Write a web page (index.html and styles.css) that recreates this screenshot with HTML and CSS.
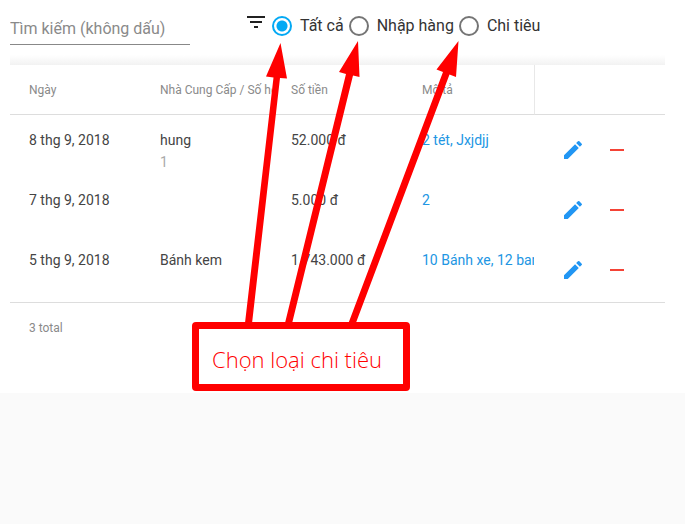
FILE: index.html
```html
<!DOCTYPE html>
<html lang="vi">
<head>
<meta charset="utf-8">
<meta name="viewport" content="width=device-width, initial-scale=1">
<title>Chi tiêu</title>
<link rel="stylesheet" href="styles.css">
</head>
<body>
<svg class="symbols" aria-hidden="true">
  <symbol id="edit" viewBox="0 0 24 24"><path d="M3 17.25V21h3.75L17.81 9.94l-3.75-3.75L3 17.25zM20.71 7.04a1 1 0 0 0 0-1.41l-2.34-2.34a1 1 0 0 0-1.41 0l-1.83 1.83 3.75 3.75 1.83-1.83z"/></symbol>
  <symbol id="remove" viewBox="0 0 24 24"><path d="M5 11h14v2H5z"/></symbol>
</svg>
<main class="page">
  <form class="toolbar">
    <input class="search" type="text" placeholder="Tìm kiếm (không dấu)" aria-label="Tìm kiếm (không dấu)">
    <div class="filters">
      <svg class="filter-icon" viewBox="0 0 18 12" aria-hidden="true"><path d="M0 0h18v2H0zM3 5h12v2H3zM7 10h4v2H7z"/></svg>
      <label class="option"><input type="radio" name="kind" checked><span>Tất cả</span></label>
      <label class="option"><input type="radio" name="kind"><span>Nhập hàng</span></label>
      <label class="option"><input type="radio" name="kind"><span>Chi tiêu</span></label>
    </div>
  </form>
  <div class="shade"></div>
  <table class="expenses">
    <thead>
      <tr><th>Ngày</th><th>Nhà Cung Cấp / Số hóa đơn</th><th>Số tiền</th><th>Mô tả</th><th class="divider"></th></tr>
    </thead>
    <tbody>
      <tr>
        <td>8 thg 9, 2018</td><td>hung<div class="invoice">1</div></td><td>52.000 đ</td><td><a href="#">2 tét, Jxjdjj</a></td>
        <td class="actions"><div class="buttons"><button type="button" class="edit" aria-label="Sửa"><svg><use href="#edit"/></svg></button><button type="button" class="remove" aria-label="Xóa"><svg><use href="#remove"/></svg></button></div></td>
      </tr>
      <tr>
        <td>7 thg 9, 2018</td><td></td><td>5.000 đ</td><td><a href="#">2</a></td>
        <td class="actions"><div class="buttons"><button type="button" class="edit" aria-label="Sửa"><svg><use href="#edit"/></svg></button><button type="button" class="remove" aria-label="Xóa"><svg><use href="#remove"/></svg></button></div></td>
      </tr>
      <tr>
        <td>5 thg 9, 2018</td><td>Bánh kem</td><td>1.743.000 đ</td><td><a href="#">10 Bánh xe, 12 banh</a></td>
        <td class="actions"><div class="buttons"><button type="button" class="edit" aria-label="Sửa"><svg><use href="#edit"/></svg></button><button type="button" class="remove" aria-label="Xóa"><svg><use href="#remove"/></svg></button></div></td>
      </tr>
    </tbody>
  </table>
  <footer class="total">3 total</footer>
  <svg class="arrows" viewBox="0 0 685 340" aria-hidden="true">
    <path d="M280.500 43L287 78.500 280 78 252 323.500 245 323 273.500 77.500 266 76.500z"/>
    <path d="M358 41L359.500 77 353 75.500 292 323.500 285 323 346 74 339 72z"/>
    <path d="M458.500 41L456 77 449.500 74.500 355.500 324 348.500 323 443 72 436.500 69.500z"/>
  </svg>
  <div class="callout">Chọn loại chi tiêu</div>
</main>
</body>
</html>
```
FILE: styles.css
```css
* { box-sizing: border-box; }
body {
  margin: 0;
  background: #fafafa;
  color: #444;
  font: 14px/20px Roboto, "Noto Sans", sans-serif;
}
.symbols { position: absolute; width: 0; height: 0; }
.page {
  position: relative;
  background: #fff;
  padding: 12px 20px 46px 10px;
}
.toolbar {
  display: flex;
  align-items: flex-start;
  gap: 57px;
  height: 43px;
}
.search {
  width: 180px;
  height: 33px;
  padding: 0;
  border: 0;
  border-bottom: 1px solid #888;
  background: none;
  font: inherit;
  font-size: 16px;
  outline: 0;
}
.search::placeholder { color: #8a8a8a; opacity: 1; }
.filters { display: flex; align-items: center; height: 28px; }
.filter-icon { width: 18px; height: 12px; margin: 0 7px 8px 0; fill: #212121; }
.option {
  display: flex;
  align-items: center;
  gap: 8px;
  margin-right: 5px;
  color: #333;
  font-size: 16px;
}
.option input {
  appearance: none;
  width: 20px;
  height: 20px;
  margin: 0;
  border: 2px solid #757575;
  border-radius: 50%;
}
.option input:checked {
  border-color: #03a9f4;
  background: radial-gradient(circle, #03a9f4 5px, transparent 6px);
}
.shade { height: 10px; background: linear-gradient(#fff, #f2f2f2); }
.expenses { width: 100%; table-layout: fixed; border-collapse: separate; border-spacing: 0; padding-bottom: 2px; border-bottom: 1px solid #ddd; }
.expenses th, .expenses td {
  padding: 0 0 0 19px;
  text-align: left;
  vertical-align: top;
  white-space: nowrap;
  overflow: hidden;
}
.expenses th {
  height: 50px;
  border-bottom: 1px solid #ddd;
  color: #8a8a8a;
  font-size: 12px;
  font-weight: 400;
  vertical-align: middle;
}
.expenses .divider { border-left: 1px solid #e8e8e8; }
.expenses td { height: 60px; padding-top: 10px; }
.expenses tbody::before { content: ""; display: block; height: 5px; }
.invoice { color: #aaa; line-height: 24px; }
.expenses a { color: #2196e3; text-decoration: none; }
.expenses .actions { padding: 0 0 0 19px; vertical-align: middle; }
.buttons { display: flex; gap: 4px; }
.buttons button {
  display: grid;
  place-items: center;
  width: 40px;
  height: 40px;
  padding: 0;
  border: 0;
  background: none;
}
.buttons svg { width: 24px; height: 24px; fill: currentColor; }
.edit { color: #2196f3; }
.remove { color: #f44336; }
.total { padding: 15px 19px 0; height: 44px; color: #8a8a8a; font-size: 12px; }
.arrows { position: absolute; left: 0; top: 0; width: 685px; height: 340px; fill: #f00; pointer-events: none; }
.callout {
  position: absolute;
  left: 192px;
  top: 322px;
  padding: 16px 21px 11px 13px;
  border: 7px solid #f00;
  border-radius: 4px;
  background: #fff;
  color: #f00;
  font: 300 22px/28px "Open Sans", "Noto Sans", sans-serif;
  white-space: nowrap;
}
```
